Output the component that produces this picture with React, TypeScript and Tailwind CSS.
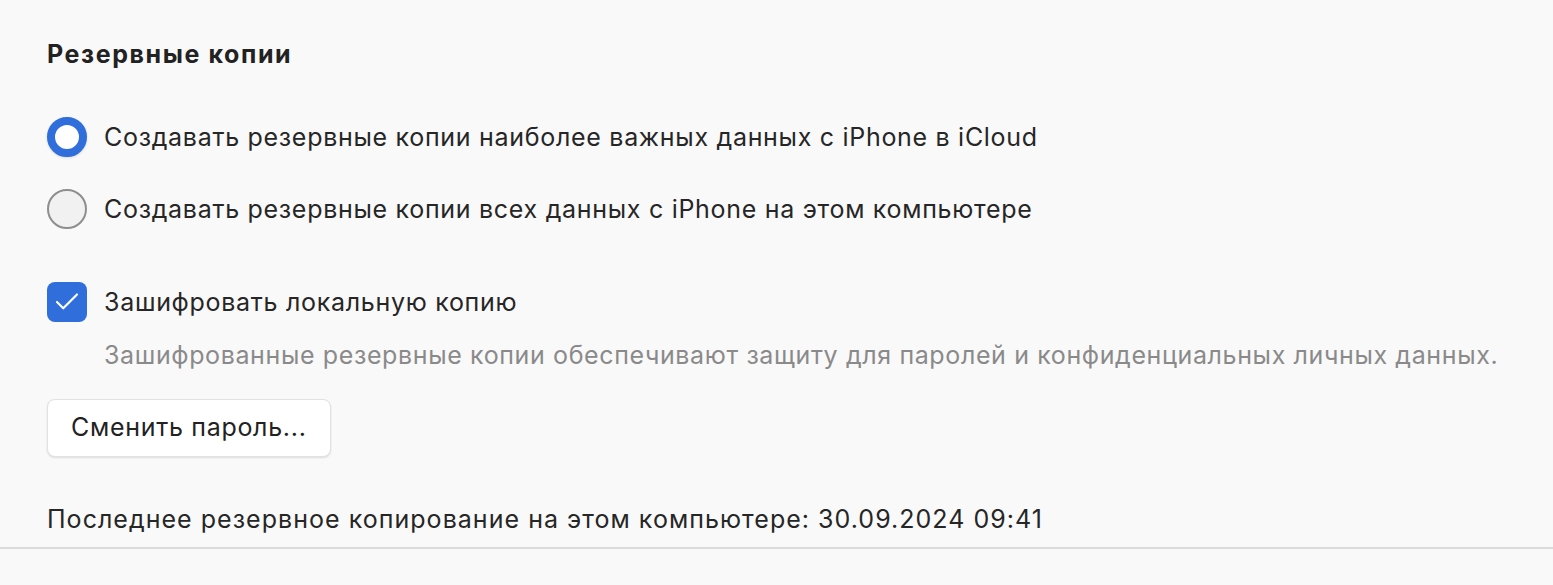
import { Check } from 'lucide-react';

export default function App() {
    return (
        <div className="w-[1553px] h-[585px] bg-[#f9f9f9] font-['Inter','Liberation_Sans',sans-serif] text-[#262626] overflow-hidden tracking-[0.7px]">
            <div className="pl-[47px] pt-[38px]">
                <h2 className="text-[25px] leading-[32px] font-bold tracking-[1.6px] text-[#222]">Резервные копии</h2>

                <div className="mt-[47px] flex flex-col gap-[32px]">
                    <label className="flex items-center gap-[17px]">
                        <span className="w-[40px] h-[40px] rounded-full border-[8px] border-[#2f6edb] bg-white shadow-sm"></span>
                        <span className="text-[25px] leading-[40px]">Создавать резервные копии наиболее важных данных с iPhone в iCloud</span>
                    </label>
                    <label className="flex items-center gap-[17px]">
                        <span className="w-[40px] h-[40px] rounded-full border-2 border-[#8e8e8e] bg-[#f1f1f1]"></span>
                        <span className="text-[25px] leading-[40px]">Создавать резервные копии всех данных с iPhone на этом компьютере</span>
                    </label>
                </div>

                <label className="mt-[53px] flex items-center gap-[17px]">
                    <span className="w-[40px] h-[40px] rounded-[8px] bg-[#2f6edb] flex items-center justify-center">
                        <Check className="w-[30px] h-[30px] text-white" strokeWidth={1.7} />
                    </span>
                    <span className="text-[25px] leading-[40px]">Зашифровать локальную копию</span>
                </label>
                <p className="ml-[57px] mt-[19px] text-[25px] leading-[28px] tracking-[0.62px] text-[#8a8a8a]">
                    Зашифрованные резервные копии обеспечивают защиту для паролей и конфиденциальных личных данных.
                </p>

                <button className="mt-[30px] h-[58px] w-[284px] rounded-[8px] bg-white border border-[#e2e2e2] shadow-[0_1px_2px_rgba(0,0,0,0.12)] text-left pl-[23px] text-[25px] text-[#222]">
                    Сменить пароль...
                </button>

                <p className="mt-[47px] text-[25px] leading-[30px] tracking-[1.03px]">
                    Последнее резервное копирование на этом компьютере: 30.09.2024 09:41
                </p>
            </div>
            <div className="mt-[13px] h-[2px] bg-[#dadada]"></div>
        </div>
    );
}
